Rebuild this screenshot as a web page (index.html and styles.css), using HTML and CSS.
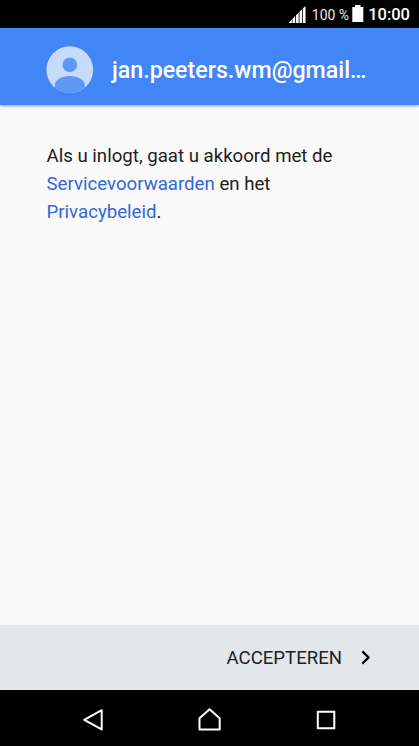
FILE: index.html
```html
<!DOCTYPE html>
<html lang="nl">
<head>
<meta charset="utf-8">
<meta name="viewport" content="width=device-width, initial-scale=1">
<title>Servicevoorwaarden</title>
<link rel="stylesheet" href="styles.css">
</head>
<body>
<div class="status-bar">
  <svg class="signal" width="17" height="17" viewBox="0 0 17 17" fill="#fff"><path d="M0 17v-.8L2.800 13.400V17zM3.500 17v-4.300l2.700-2.700v7zM7 17V9.200l2.700-2.700V17zM10.500 17V5.700l2.700-2.700V17zM14 17V2.200L16.500 0v17z"/></svg>
  <span class="percent">100 %</span>
  <svg class="battery" width="12" height="17" viewBox="0 0 12 17" fill="#fff"><path d="M3 0h5.500v2H11.300v15H.3V2H3z"/></svg>
  <span class="clock">10:00</span>
</div>
<header class="account">
  <svg class="avatar" width="48" height="48" viewBox="0 0 48 48">
    <circle cx="23.800" cy="23.700" r="23.400" fill="#c6dafc"/>
    <circle cx="23.800" cy="18.800" r="7.300" fill="#5e97f6"/>
    <path d="M8.800 41.600v-2.600c0-4.700 6.500-8.900 15-8.900s15 4.200 15 8.900v2.600A23.400 23.400 0 0 1 8.800 41.600z" fill="#5e97f6"/>
  </svg>
  <span class="email">jan.peeters.wm@gmail…</span>
</header>
<main class="content">
  <p class="terms">Als u inlogt, gaat u akkoord met de<br><a class="link">Servicevoorwaarden</a> en het<br><a class="link">Privacybeleid</a>.</p>
</main>
<footer class="actions">
  <span class="accept">ACCEPTEREN</span>
  <svg class="chevron" width="10" height="16" viewBox="0 0 10 16" fill="none" stroke="#000" stroke-width="2.300"><path d="M1.400 1.400 7.500 7.500l-6.100 6.100"/></svg>
</footer>
<nav class="nav-bar">
  <svg width="24" height="24" viewBox="0 0 24 24" fill="none" stroke="#fff" stroke-width="2" stroke-linejoin="round"><path d="M3.200 11.800 20.700 2.200v19.200z"/></svg>
  <svg width="24" height="24" viewBox="0 0 24 24" fill="none" stroke="#fff" stroke-width="2" stroke-linejoin="round"><path d="M1.500 10.300 11.600 1.300 21.700 10.300v11.200H1.500z"/></svg>
  <svg width="24" height="24" viewBox="0 0 24 24" fill="none" stroke="#fff" stroke-width="2" stroke-linejoin="round"><path d="M2.800 3.800h16.500v16.500H2.800z"/></svg>
</nav>
</body>
</html>
```
FILE: styles.css
```css
* {
  box-sizing: border-box;
}

body {
  margin: 0;
  height: 746px;
  display: flex;
  flex-direction: column;
  overflow: hidden;
  background: #fafafa;
  color: #212121;
  font-family: Roboto, "Liberation Sans", sans-serif;
}

svg {
  display: block;
  flex: none;
}

.status-bar {
  height: 28px;
  flex: none;
  display: flex;
  align-items: center;
  justify-content: flex-end;
  padding-right: 9px;
  background: #000;
  color: #fff;
  white-space: nowrap;
}

.signal {
  margin-top: 1px;
}

.battery {
  margin-top: -1px;
}

.percent {
  margin: 2px 3px 0 6px;
  font-size: 14px;
  line-height: 18px;
  color: #e8e8e8;
}

.clock {
  margin: 2px 0 0 4px;
  font-size: 16.500px;
  font-weight: 500;
  line-height: 20px;
}

.account {
  height: 77px;
  flex: none;
  display: flex;
  align-items: center;
  gap: 18px;
  padding: 7px 34px 0 46px;
  background: #4285f4;
  box-shadow: 0 1px 3px rgba(0, 0, 0, 0.4);
  color: #fff;
}

.email {
  font-size: 23.200px;
  font-weight: 500;
  line-height: 28px;
  white-space: nowrap;
}

.content {
  flex: 1;
  padding: 37px 46px 0 46.500px;
}

.terms {
  margin: 0;
  font-size: 18.650px;
  line-height: 28px;
  white-space: nowrap;
}

.link {
  color: #3367d6;
}

.actions {
  height: 65px;
  flex: none;
  display: flex;
  align-items: center;
  justify-content: flex-end;
  gap: 19px;
  padding-right: 48px;
  background: #e3e7ea;
}

.accept {
  font-size: 18.600px;
  line-height: 24px;
}

.nav-bar {
  height: 56px;
  flex: none;
  display: flex;
  align-items: center;
  justify-content: center;
  gap: 93px;
  padding-top: 4px;
  background: #000;
}
```
